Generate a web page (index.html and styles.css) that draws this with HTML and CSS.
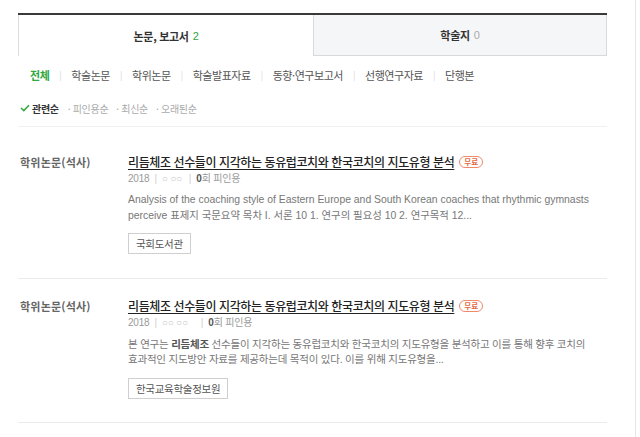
FILE: index.html
```html
<!DOCTYPE html>
<html lang="ko">
<head>
<meta charset="utf-8">
<link rel="stylesheet" href="styles.css">
</head>
<body>
<div class="page">
  <div class="tabs">
    <div class="tab tab-active">논문, 보고서 <span class="cnt-green">2</span></div>
    <div class="tab tab-off">학술지 <span class="cnt-gray">0</span></div>
  </div>

  <div class="filters">
    <span class="f f-on">전체</span><span class="sep">|</span>
    <span class="f">학술논문</span><span class="sep">|</span>
    <span class="f">학위논문</span><span class="sep">|</span>
    <span class="f">학술발표자료</span><span class="sep">|</span>
    <span class="f">동향·연구보고서</span><span class="sep">|</span>
    <span class="f">선행연구자료</span><span class="sep">|</span>
    <span class="f">단행본</span>
  </div>

  <div class="sorts">
    <svg class="check" width="10" height="8" viewBox="0 0 10 8"><path d="M1 4 L3.8 6.6 L9 1.2" fill="none" stroke="#3aa845" stroke-width="1.6"/></svg>
    <span class="s s-on">관련순</span>
    <span class="s">· 피인용순</span>
    <span class="s">· 최신순</span>
    <span class="s">· 오래된순</span>
  </div>

  <div class="list">
    <div class="item">
      <div class="kind">학위논문(석사)</div>
      <div class="body">
        <div class="title"><a class="tlink">리듬체조 선수들이 지각하는 동유럽코치와 한국코치의 지도유형 분석</a><span class="badge">무료</span></div>
        <div class="meta">2018<span class="msep">|</span><span class="author">○ ○○</span><span class="msep">|</span><b>0</b>회 피인용</div>
        <p class="abs">Analysis of the coaching style of Eastern Europe and South Korean coaches that rhythmic gymnasts<br>perceive 표제지 국문요약 목차 I. 서론 10 1. 연구의 필요성 10 2. 연구목적 12...</p>
        <span class="btn">국회도서관</span>
      </div>
    </div>
    <div class="item">
      <div class="kind">학위논문(석사)</div>
      <div class="body">
        <div class="title"><a class="tlink">리듬체조 선수들이 지각하는 동유럽코치와 한국코치의 지도유형 분석</a><span class="badge">무료</span></div>
        <div class="meta">2018<span class="msep">|</span><span class="author author2">○○ ○○</span><span class="msep">|</span><b>0</b>회 피인용</div>
        <p class="abs">본 연구는 <b>리듬체조</b> 선수들이 지각하는 동유럽코치와 한국코치의 지도유형을 분석하고 이를 통해 향후 코치의<br>효과적인 지도방안 자료를 제공하는데 목적이 있다. 이를 위해 지도유형을...</p>
        <span class="btn">한국교육학술정보원</span>
      </div>
    </div>
  </div>
</div>
</body>
</html>
```

FILE: styles.css
```css
* { box-sizing: border-box; }
html, body { margin: 0; padding: 0; background: #fff; }
body {
  font-family: "Liberation Sans", "Noto Sans CJK KR", sans-serif;
  color: #333;
  font-size: 11px;
}
.page {
  width: 636px;
  min-height: 437px;
  border-right: 1px solid #e6e6e6;
  padding: 13px 0 0 18px;
}
.tabs {
  width: 589px;
  display: grid;
  grid-template-columns: 295px 294px;
  border-top: 2px solid #3a3a3a;
}
.tab {
  height: 41px;
  display: flex;
  align-items: center;
  justify-content: center;
  font-family: "Noto Sans CJK KR", sans-serif;
  font-size: 11px;
  font-weight: 700;
  color: #333;
  letter-spacing: -0.3px;
}
.tab-active { border-left: 1px solid #dcdcdc; background: #fff; }
.tab-off { background: #f5f6f8; border: 1px solid #d9d9d9; border-top: 0; }
.cnt-green { color: #2fa83f; font-weight: 400; margin-left: 4px; font-family: "Liberation Sans", sans-serif; }
.cnt-gray { color: #aaa; font-weight: 400; margin-left: 4px; font-family: "Liberation Sans", sans-serif; }

.filters {
  height: 36px;
  display: flex;
  align-items: center;
  padding-left: 12px;
  margin-top: 1px;
  font-family: "Noto Sans CJK KR", sans-serif;
  font-size: 11px;
  letter-spacing: -0.45px;
  color: #555;
}
.f-on { color: #2fa83f; font-weight: 700; }
.sep { color: #d5d5d5; margin: 0 10px; font-size: 9px; }

.sorts {
  height: 28px;
  display: flex;
  align-items: center;
  padding-left: 2px;
  margin-top: 1px;
  font-family: "Noto Sans CJK KR", sans-serif;
  font-size: 10px;
  letter-spacing: -0.3px;
  color: #aaa;
}
.check { margin-right: 2px; }
.s { margin-right: 8px; }
.s-on { color: #333; font-weight: 700; margin-right: 9px; }

.list {
  width: 589px;
  margin-top: 4px;
  border-top: 1px solid #f0f0f0;
}
.item {
  display: grid;
  grid-template-columns: 110px 1fr;
  padding: 27px 0 24px;
  border-bottom: 1px solid #ebebeb;
}
.item + .item { padding-top: 19px; padding-bottom: 23px; }
.kind {
  padding-left: 2px;
  font-family: "Noto Sans CJK KR", sans-serif;
  font-size: 11px;
  font-weight: 700;
  color: #666;
  line-height: 16px;
  letter-spacing: 0.2px;
}
.title {
  line-height: 16px;
  font-family: "Noto Sans CJK KR", sans-serif;
  font-size: 12px;
  display: flex;
  align-items: center;
}
.tlink {
  color: #222;
  font-weight: 500;
  text-decoration: underline;
  text-underline-offset: 2px;
  letter-spacing: -0.4px;
}
.badge {
  margin-left: 5px;
  border: 1px solid #ec8a6c;
  color: #e4673f;
  border-radius: 7px;
  font-size: 7.5px;
  line-height: 10px;
  padding: 0 4px;
  font-weight: 700;
}
.meta {
  line-height: 16px;
  margin-top: 1px;
  color: #999;
  font-family: "Liberation Sans", "Noto Sans CJK KR", sans-serif;
  font-size: 10px;
  letter-spacing: -0.2px;
}
.meta b { color: #555; font-weight: 700; }
.msep { color: #d0d0d0; margin: 0 5px; }
.author { color: #c8c8c8; display: inline-block; width: 22px; }
.author2 { width: 34px; }
.abs {
  margin: 5px 0 0;
  line-height: 16px;
  font-size: 10.4px;
  color: #777;
  letter-spacing: 0;
  white-space: nowrap;
}
.abs b { color: #555; }
.item + .item .abs { line-height: 15px; margin-top: 6px; letter-spacing: -0.22px; font-size: 10.5px; }
.btn {
  display: inline-block;
  margin-top: 9px;
  height: 21px;
  line-height: 19px;
  border: 1px solid #cfcfcf;
  padding: 0 7px;
  font-family: "Noto Sans CJK KR", sans-serif;
  font-size: 10.5px;
  color: #555;
  letter-spacing: -0.3px;
}
.item + .item .btn { margin-top: 11px; }
```
